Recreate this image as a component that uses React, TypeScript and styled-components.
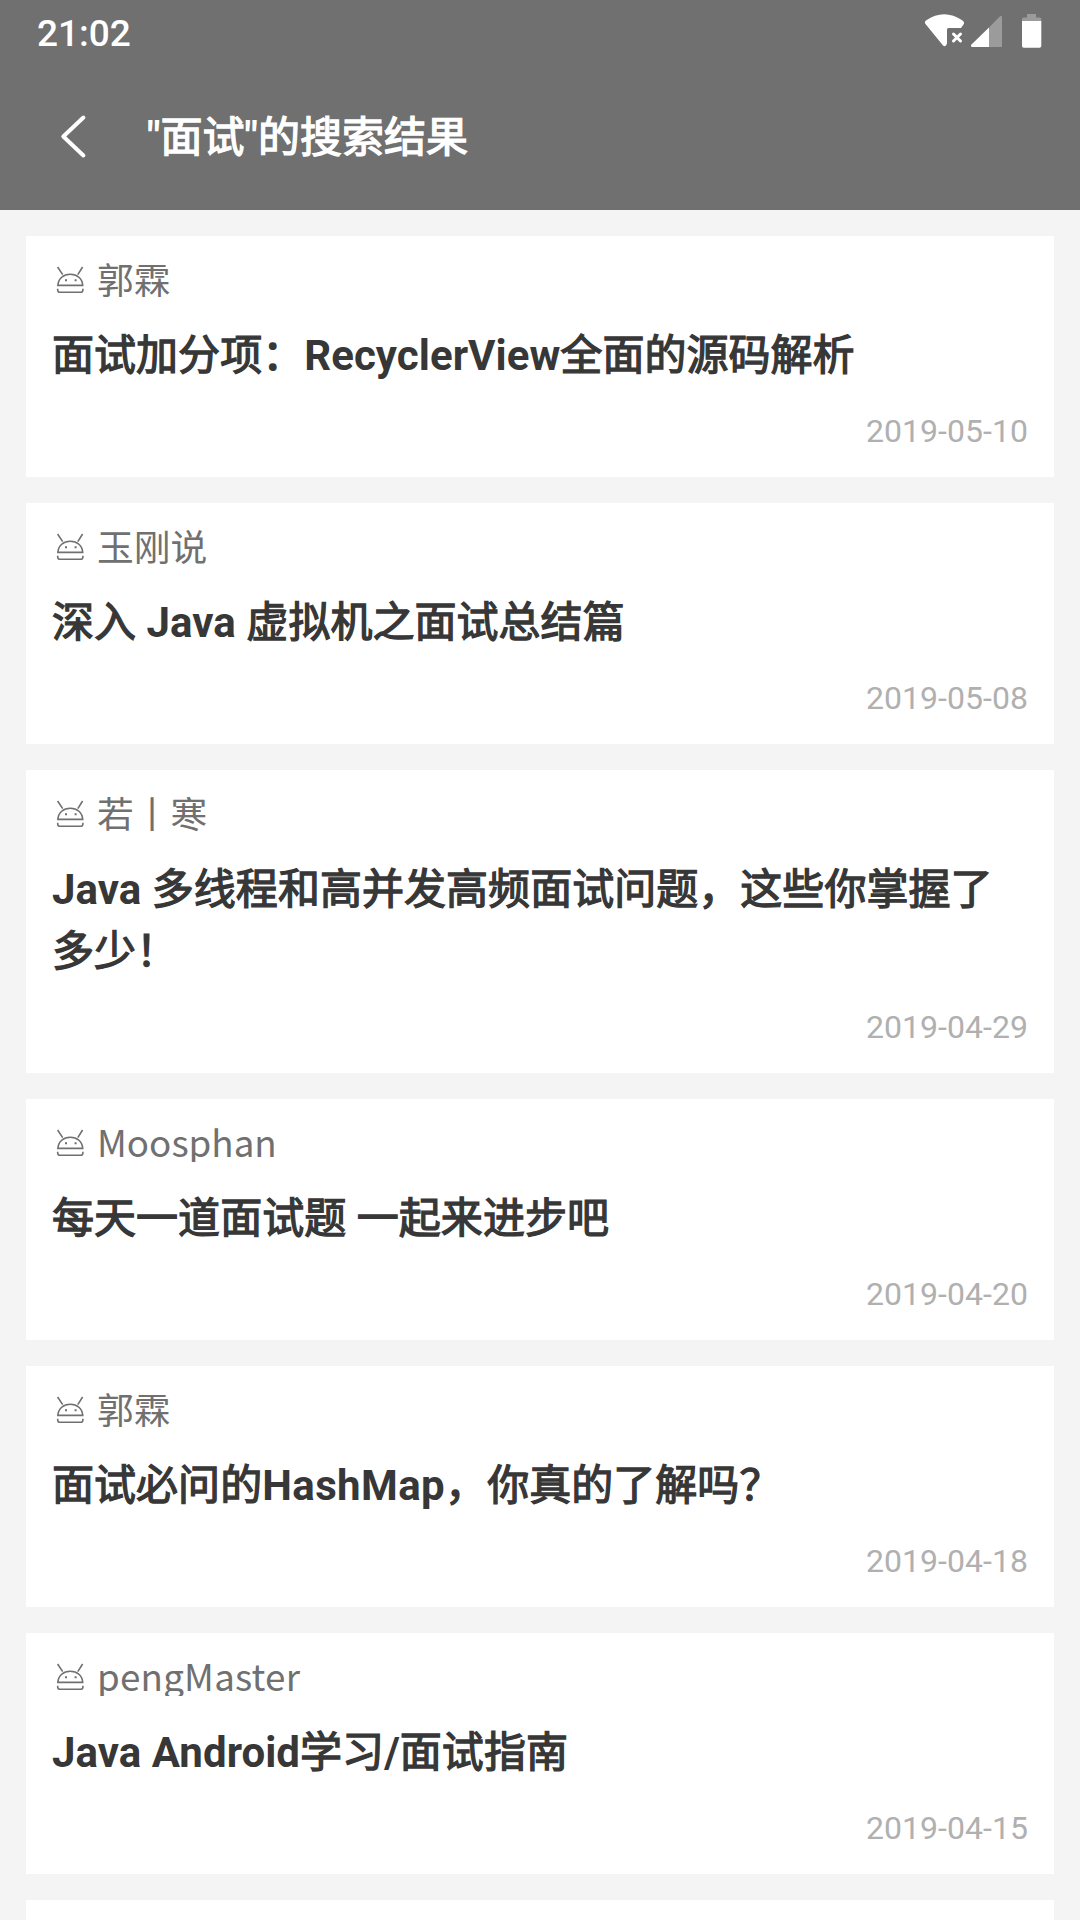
import React from "react";
import styled, { createGlobalStyle } from "styled-components";

const Global = createGlobalStyle`
  html, body { margin: 0; padding: 0; background: #f4f4f4; }
  * { box-sizing: border-box; }
`;

const Screen = styled.div`
  display: flex;
  flex-direction: column;
  width: 1080px;
  height: 1920px;
  overflow: hidden;
  background: #f4f4f4;
  font-family: Roboto, "Noto Sans CJK SC", sans-serif;
`;

const Header = styled.header`
  flex: none;
  height: 210px;
  background: #707070;
  color: #fff;
`;

const StatusBar = styled.div`
  display: flex;
  justify-content: space-between;
  height: 63px;
  padding: 0 36px 0 37px;
`;

const Clock = styled.span`
  font-size: 37px;
  font-weight: 500;
  line-height: 67px;
`;

const StatusIcons = styled.svg`
  display: block;
  width: 120px;
  height: 63px;
`;

const Toolbar = styled.div`
  display: flex;
  align-items: center;
  height: 147px;
  padding-left: 58px;
`;

const BackIcon = styled.svg`
  flex: none;
  width: 32px;
  height: 48px;
  margin-right: 57px;
`;

const ToolbarTitle = styled.h1`
  margin: 0;
  padding-top: 3px;
  font-size: 42px;
  font-weight: 700;
  line-height: 62px;
`;

const Han = styled.span`
  font-weight: 400;
  letter-spacing: 0.04px;
  -webkit-text-stroke: 1.3px currentColor;
`;

const Latin = styled.span<{ $tracking: number }>`
  letter-spacing: ${(p) => p.$tracking}px;
`;

const List = styled.main`
  display: flex;
  flex-direction: column;
  gap: 26px;
  padding: 26px 26px 0;
`;

const Card = styled.article`
  flex: none;
  display: flex;
  flex-direction: column;
  min-height: 241px;
  padding: 26px 26px 27px;
  background: #fff;
`;

const Author = styled.div<{ $tracking: number }>`
  display: flex;
  height: 37px;
  overflow: hidden;
  color: #707070;
  font-family: "Noto Sans CJK SC", sans-serif;
  font-size: 36.75px;
  letter-spacing: ${(p) => p.$tracking}px;
  line-height: 33px;
`;

const RobotIcon = styled.svg`
  flex: none;
  width: 28px;
  height: 28px;
  margin: 4px 13px 0 4px;
`;

const Title = styled.h2`
  margin: 26px 0;
  color: #373737;
  font-size: 42px;
  font-weight: 700;
  line-height: 62px;
`;

const PostDate = styled.time`
  align-self: flex-end;
  color: #b0b0b0;
  font-size: 32px;
  letter-spacing: 0.05px;
  line-height: 37px;
`;

interface Post {
  author: string;
  title: string;
  date: string;
  authorTracking?: number;
  titleTracking?: number;
}

const posts: Post[] = [
  { author: "郭霖", title: "面试加分项：RecyclerView全面的源码解析", date: "2019-05-10" },
  { author: "玉刚说", title: "深入 Java 虚拟机之面试总结篇", date: "2019-05-08" },
  { author: "若丨寒", title: "Java 多线程和高并发高频面试问题，这些你掌握了多少！", date: "2019-04-29" },
  { author: "Moosphan", title: "每天一道面试题 一起来进步吧", date: "2019-04-20" },
  { author: "郭霖", title: "面试必问的HashMap，你真的了解吗？", date: "2019-04-18", titleTracking: 0.4 },
  { author: "pengMaster", title: "Java Android学习/面试指南", date: "2019-04-15", authorTracking: 0.2 },
];

// Han runs carry a thinner emphasis than the bold Latin runs beside them.
function Emphasis({ text, tracking = 0.05 }: { text: string; tracking?: number }) {
  return (
    <>
      {text.split(/([\u3000-\u9fff\uff00-\uffef]+)/).map((run, i) => {
        if (!run) return null;
        return i % 2 === 1 ? (
          <Han key={i}>{run}</Han>
        ) : (
          <Latin key={i} $tracking={tracking}>
            {run}
          </Latin>
        );
      })}
    </>
  );
}

function Robot() {
  return (
    <RobotIcon viewBox="0 0 28 28" fill="none" stroke="#707070" strokeWidth="1.6">
      <path d="M1.6 1 6.700 8.600M26.600 1l-4.800 7.600" />
      <path d="M1.900 19.400C2.300 12.600 7.500 8.200 14.300 8.200S26.300 12.600 26.700 19.400Z" />
      <path d="M1.700 22.700v1.200q0 2.300 2.300 2.300h20.600q2.300 0 2.300-2.300v-1.200" />
      <path d="M9 14.200h2M18.600 14.200h2" strokeWidth="2" />
    </RobotIcon>
  );
}

export default function App() {
  return (
    <Screen>
      <Global />
      <Header>
        <StatusBar>
          <Clock>21:02</Clock>
          <StatusIcons viewBox="924 0 120 63">
            <path
              d="M926 20.500Q944 8 962.500 20.500Q965 22.500 963.500 24.500L961 28H948.500Q947 28 947 29.500V43.500L946 45.500Q944.500 47 943 45.500L925.500 24Q924 22 926 20.500Z"
              fill="#fff"
            />
            <path d="m953.500 34 7 7m0-7-7 7" stroke="#fff" strokeWidth="3" strokeLinecap="round" />
            <path d="M989 27.500 999.500 16.700Q1002 14.700 1002 17.500V47H989Z" fill="#9b9b9b" />
            <path d="M989 27.500V47H972.500Q970 46.500 971.500 44.500Z" fill="#fff" />
            <path d="M1027 14h9v3.500h3.500q1.800 0 1.800 1.800V21h-19.300v-1.700q0-1.800 1.800-1.800H1027Z" fill="#9b9b9b" />
            <path d="M1022 21h19.300v25q0 1.800-1.800 1.800h-15.700q-1.800 0-1.800-1.800Z" fill="#fff" />
          </StatusIcons>
        </StatusBar>
        <Toolbar>
          <BackIcon viewBox="0 0 32 48" fill="none" stroke="#fff" strokeWidth="4" strokeLinecap="round" strokeLinejoin="round">
            <path d="M25.400 4.500 5.300 23.500 25.400 42.500" />
          </BackIcon>
          <ToolbarTitle>
            <Emphasis text={'"面试"的搜索结果'} />
          </ToolbarTitle>
        </Toolbar>
      </Header>
      <List>
        {posts.map((post) => (
          <Card key={post.title}>
            <Author $tracking={post.authorTracking ?? 0}>
              <Robot />
              {post.author}
            </Author>
            <Title>
              <Emphasis text={post.title} tracking={post.titleTracking} />
            </Title>
            <PostDate>{post.date}</PostDate>
          </Card>
        ))}
        <Card />
      </List>
    </Screen>
  );
}
